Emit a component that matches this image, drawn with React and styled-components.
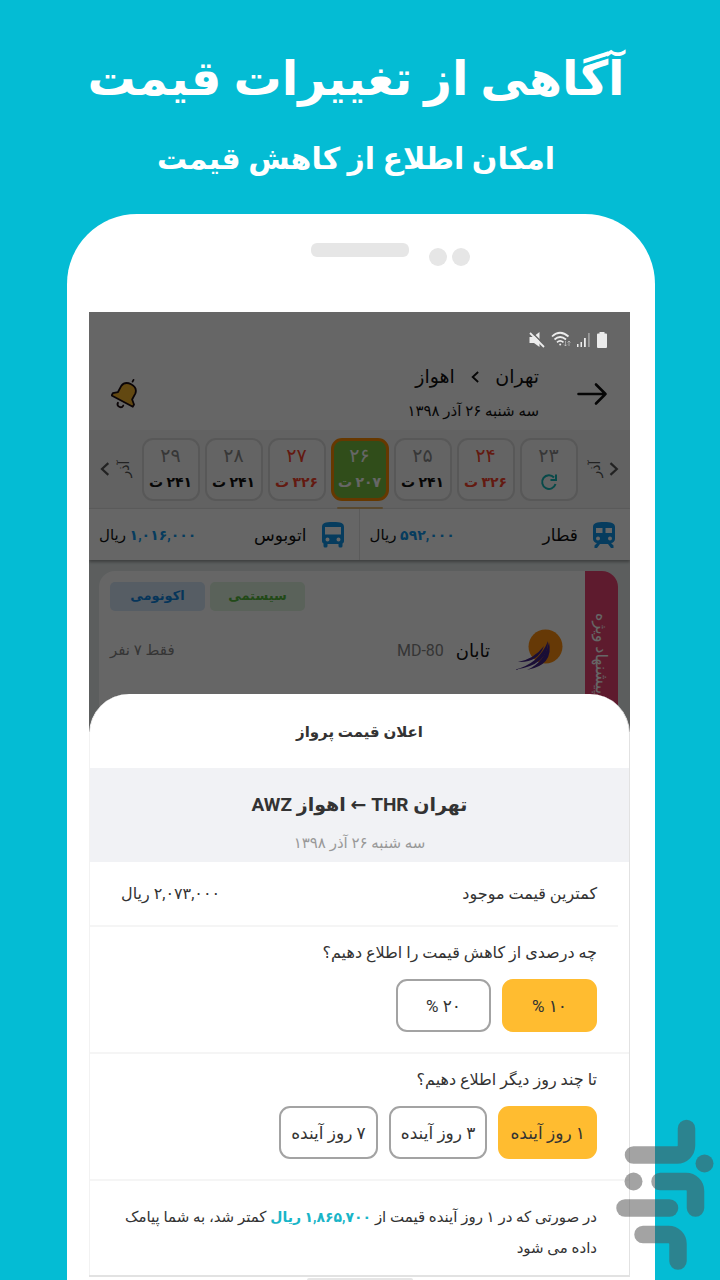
import React, { useState } from "react";
import styled, { createGlobalStyle, css } from "styled-components";

const GlobalStyle = createGlobalStyle`
  *, *::before, *::after { box-sizing: border-box; }
  body {
    margin: 0;
    background: #04bcd4;
    font-family: Roboto, "DejaVu Sans", sans-serif;
    color: #333;
  }
  button { font-family: inherit; color: inherit; cursor: pointer; }
  h1, h2, h3, p { margin: 0; }
`;

const Page = styled.div`
  min-height: 100vh;
  display: flex;
  flex-direction: column;
  position: relative;
  overflow: hidden;
`;

const Hero = styled.header`
  direction: rtl;
  padding: 44px 24px 30px 16px;
  display: flex;
  flex-direction: column;
  align-items: center;
  gap: 20px;
  color: #fff;
  white-space: nowrap;
`;

const HeroTitle = styled.h1`
  font-size: 48px;
  line-height: 70px;
  font-weight: 700;
`;

const HeroSubtitle = styled.p`
  font-size: 30px;
  line-height: 50px;
  font-weight: 700;
`;

const Phone = styled.main`
  flex: 1;
  margin: 0 65px 0 67px;
  padding: 0 25px 0 22px;
  background: #fff;
  border-radius: 70px 70px 0 0;
`;

const PhoneTop = styled.div`
  height: 98px;
  padding-top: 29px;
  display: grid;
  grid-template-columns: 1fr auto 1fr;
  align-items: start;
`;

const Speaker = styled.span`
  grid-column: 2;
  width: 98px;
  height: 14px;
  border-radius: 6px;
  background: #e6e6e6;
`;

const Sensors = styled.span`
  display: flex;
  gap: 5px;
  padding: 5px 0 0 20px;
`;

const Sensor = styled.i`
  width: 18px;
  height: 18px;
  border-radius: 50%;
  background: #e6e6e6;
`;

const Screen = styled.div`
  direction: rtl;
  border-bottom: 2px solid #e2e2e2;
`;

const AppView = styled.div`
  position: relative;
  overflow: hidden;
  background: #fff;
  color: #111;
`;

const Scrim = styled.div`
  position: absolute;
  inset: 0;
  background: rgba(0, 0, 0, 0.6);
`;

const StatusBar = styled.div`
  position: relative;
  z-index: 1;
  direction: ltr;
  height: 46px;
  padding: 10px 22px 0 0;
  display: flex;
  justify-content: flex-end;
  align-items: center;
  gap: 5px;
`;

const AppBar = styled.div`
  height: 72px;
  padding: 0 22px;
  display: flex;
  align-items: center;
`;

const IconButton = styled.button`
  border: 0;
  padding: 0;
  background: none;
  display: flex;
`;

const TripInfo = styled.div`
  flex: 1;
  margin-right: 38px;
`;

const TripCities = styled.h2`
  display: flex;
  align-items: center;
  gap: 16px;
  font-size: 19px;
  line-height: 34px;
  font-weight: 400;
`;

const TripDate = styled.p`
  font-size: 15px;
  line-height: 34px;
`;

const DateStrip = styled.div`
  height: 79px;
  padding: 0 11px;
  display: flex;
  align-items: center;
  justify-content: space-between;
  background: #f4f4f4;
  border-bottom: 1px solid #e6e6e6;
`;

const MonthNav = styled.button`
  border: 0;
  padding: 0;
  background: none;
  display: flex;
  flex-direction: ${(p) => (p.$end ? "row-reverse" : "row")};
  align-items: center;
  gap: 4px;
  color: #555;
`;

const MonthName = styled.span`
  width: 20px;
  font-size: 14px;
  line-height: 20px;
  display: flex;
  justify-content: center;
  transform: rotate(-90deg);
`;

const Days = styled.div`
  display: flex;
  gap: 5px;
`;

const Day = styled.button`
  position: relative;
  width: 58px;
  height: 63px;
  padding: 0;
  border: 2px solid #dcdcdc;
  border-radius: 11px;
  background: #fafafa;
  display: flex;
  flex-direction: column;
  align-items: center;
  justify-content: center;
  white-space: nowrap;
  color: ${(p) => (p.$hot ? "#f8432c" : "#111")};
  ${(p) =>
    p.$active &&
    css`
      background: #79c142;
      border: 3px solid #ff8c00;
      color: #fff;

      &::after {
        content: "";
        position: absolute;
        bottom: -11px;
        width: 46px;
        height: 2px;
        border-radius: 2px;
        background: #e0b878;
      }
    `}
`;

const DayNumber = styled.span`
  font-size: 19px;
  line-height: 26px;
  color: ${(p) => (p.$muted ? "#8a8a8a" : "inherit")};
`;

const DayPrice = styled.span`
  height: 26px;
  font-size: 14px;
  line-height: 26px;
  font-weight: 700;
  display: flex;
  align-items: center;
`;

const Modes = styled.div`
  height: 51px;
  display: grid;
  grid-template-columns: 1fr 1fr;
  box-shadow: 0 2px 3px rgba(0, 0, 0, 0.35);
  position: relative;
`;

const Mode = styled.a`
  display: flex;
  align-items: center;
  gap: 15px;
  padding: 0 15px 0 10px;
  color: #111;
  text-decoration: none;
  font-size: 17px;
  white-space: nowrap;

  & + & {
    border-right: 1px solid #e4e4e4;
  }
`;

const ModePrice = styled.span`
  margin-right: auto;
  font-size: 15px;

  b {
    font-size: 14px;
    color: #0f96ea;
  }
`;

const Results = styled.div`
  height: 172px;
  padding: 11px 12px 0 10px;
  background: #e6ecec;
`;

const Flight = styled.article`
  height: 161px;
  display: flex;
  background: #fff;
  border-radius: 16px 16px 0 0;
  overflow: hidden;
`;

const Ribbon = styled.div`
  width: 33px;
  background: #ea4573;
  color: #fff;
  writing-mode: vertical-rl;
  display: flex;
  justify-content: flex-end;
  align-items: center;
  padding-top: 42px;
  font-size: 16px;
  white-space: nowrap;
`;

const FlightBody = styled.div`
  flex: 1;
  padding: 11px 22px 0 11px;
`;

const Tags = styled.div`
  display: flex;
  justify-content: flex-end;
  gap: 5px;
`;

const Tag = styled.span`
  width: 95px;
  height: 29px;
  border-radius: 5px;
  font-size: 13px;
  line-height: 28px;
  font-weight: 700;
  text-align: center;
  color: ${(p) => (p.$green ? "#55b83c" : "#0f86e0")};
  background: ${(p) => (p.$green ? "#e0f5e0" : "#d6e8fb")};
`;

const FlightRow = styled.div`
  margin-top: 18px;
  display: flex;
  align-items: center;
`;

const Airline = styled.span`
  margin: 0 24px 0 12px;
  font-size: 18px;
`;

const Muted = styled.span`
  font-size: ${(p) => p.$size || 16}px;
  color: #858585;
`;

const Seats = styled(Muted)`
  margin-right: auto;
`;

const Sheet = styled.section`
  position: relative;
  margin-top: -38px;
  background: #fff;
  border-radius: 40px 40px 0 0;
  border-right: 1px solid #e2e2e2;
  border-left: 1px solid #f2f2f2;
`;

const SheetTitle = styled.h2`
  padding: 19px 0 17px;
  font-size: 15px;
  line-height: 38px;
  font-weight: 700;
  text-align: center;
`;

const RouteBox = styled.div`
  height: 94px;
  padding-top: 18px;
  background: #f1f2f5;
  text-align: center;
`;

const RouteName = styled.h3`
  font-size: 19px;
  line-height: 38px;
  font-weight: 700;
`;

const RouteDate = styled.p`
  font-size: 15px;
  line-height: 38px;
  color: #999;
`;

const Lowest = styled.div`
  height: 65px;
  margin-right: 11px;
  padding: 0 21px 0 31px;
  display: flex;
  align-items: center;
  justify-content: space-between;
  font-size: 16px;
  border-bottom: 2px solid #f5f5f5;
`;

const Question = styled.div`
  padding: 9px 32px 20px;
  border-bottom: 2px solid #f5f5f5;
`;

const QuestionText = styled.p`
  font-size: 16px;
  line-height: 34px;
  margin-bottom: 9px;
`;

const Options = styled.div`
  display: flex;
  gap: 11px;
`;

const Option = styled.button`
  min-width: 95px;
  height: 53px;
  padding: 0 10px;
  border: 2px solid ${(p) => (p.$active ? "#ffbc30" : "#a3a3a3")};
  border-radius: 11px;
  background: ${(p) => (p.$active ? "#ffbc30" : "#fff")};
  font-size: 17px;
  white-space: nowrap;
`;

const Note = styled.p`
  padding: 21px 32px 11px 24px;
  font-size: 15px;
  line-height: 31px;

  b {
    font-size: 14px;
    color: #19b5c8;
  }
`;

const HomeKey = styled.div`
  width: 106px;
  height: 2px;
  margin: 1px auto 0;
  border-radius: 2px 2px 0 0;
  background: #e6e6e6;
`;

const Watermark = styled.svg`
  position: absolute;
  right: 6px;
  bottom: 9px;
`;

function StatusIcons() {
  return (
    <>
      <svg width="18" height="18" viewBox="0 0 18 18" fill="#ececec">
        <path d="M1.500 6H5l6.500-5v15L6 12H1.500z" />
        <path d="M3.500 1l13 13" stroke="#666" strokeWidth="1.600" />
        <path d="M2 2l14 14" stroke="#ececec" strokeWidth="1.800" />
      </svg>
      <svg width="20" height="18" viewBox="0 0 20 18" fill="none" stroke="#ececec" strokeWidth="1.700">
        <path d="M1 5.500Q9 -2 17.500 5.500M3.500 8.500Q9 3.500 15 8.500M6 11.300Q9 8.500 12.500 11.300" />
        <circle cx="9.200" cy="13.500" r="1" fill="#ececec" stroke="none" />
        <path d="M14.500 10v5m-1.500-1.500l1.500 1.500 1.500-1.500M18 15v-5m-1.500 1.500L18 10l1.500 1.500" strokeWidth=".8" opacity=".6" />
      </svg>
      <svg width="15" height="18" viewBox="0 0 15 18" fill="#ececec">
        <path d="M1 13h1.500v3H1zM4.500 11H6v5H4.500zM8 7h1.800v9H8z" />
        <path d="M12 2h1.800v14H12z" opacity=".4" />
      </svg>
      <svg width="12" height="18" viewBox="0 0 12 18" fill="#ececec">
        <path d="M3.500 1h5v1.500H10q1 0 1 1V16q0 1-1 1H2q-1 0-1-1V3.500q0-1 1-1h1.500z" />
      </svg>
    </>
  );
}

const Chevron = ({ left, size = 14 }) => (
  <svg width={size * 0.7} height={size} viewBox="0 0 10 14" fill="none" stroke="currentColor" strokeWidth="2.200">
    <path d={left ? "M8.500 1L2 7l6.500 6" : "M1.500 1L8 7l-6.500 6"} />
  </svg>
);

const BackArrow = () => (
  <svg width="31" height="24" viewBox="0 0 31 24" fill="none" stroke="#111" strokeWidth="2.600" strokeLinecap="round" strokeLinejoin="round">
    <path d="M1.500 12h27M19 2.500L28.500 12 19 21.500" />
  </svg>
);

const Bell = () => (
  <svg width="30" height="32" viewBox="0 0 30 32">
    <g transform="rotate(28 15 16)" stroke="#1d0d12" strokeWidth="1.800" strokeLinejoin="round" strokeLinecap="round">
      <path d="M15 0v2" fill="none" />
      <path d="M7 11q1-6 8-6t8 6v7l4 3.500V24H3v-2.500L7 18z" fill="#f5b42c" />
      <path d="M12 27.500q0 3 3 3t3-3" fill="none" />
    </g>
  </svg>
);

const Refresh = () => (
  <svg width="18" height="18" viewBox="0 0 18 18" fill="none" stroke="#12b6b6" strokeWidth="2">
    <path d="M15.500 11a6.800 6.800 0 1 1-1.500-6.500" />
    <path d="M16 1.500V7h-5.500" />
  </svg>
);

const Train = () => (
  <svg width="22" height="26" viewBox="0 0 22 26">
    <path fill="#0f96ea" fillRule="evenodd" d="M11 0c7 0 11 1 11 5v12c0 2-2 4-4 4l2.500 2.500V26H18l-3-4H7l-3 4H1.500v-2.500L4 21c-2 0-4-2-4-4V5C0 1 4 0 11 0zM3 6v5h6.500V6zm9.500 0v5H19V6zM5 14.500a2 2 0 1 0 0 4 2 2 0 0 0 0-4zm12 0a2 2 0 1 0 0 4 2 2 0 0 0 0-4z" />
  </svg>
);

const Bus = () => (
  <svg width="22" height="26" viewBox="0 0 22 26">
    <path fill="#0f96ea" fillRule="evenodd" d="M11 0c8 0 11 1 11 5v14c0 1-.500 2-1.500 2.500V24q0 1.500-1.500 1.500h-1q-1.500 0-1.500-1.500v-2h-11v2q0 1.500-1.500 1.500H3Q1.500 25.500 1.500 24v-2.500C.500 21 0 20 0 19V5C0 1 3 0 11 0zM3 5v7.500h16V5zm2.500 10.500a2 2 0 1 0 0 4 2 2 0 0 0 0-4zm11 0a2 2 0 1 0 0 4 2 2 0 0 0 0-4z" />
  </svg>
);

const TabanLogo = () => (
  <svg width="49" height="42" viewBox="0 0 49 42">
    <circle cx="31.500" cy="17.500" r="17" fill="#ff9010" />
    <g fill="#432487">
      <path d="M4 33Q20 30 30 17Q24 34 4 33z" />
      <path d="M0 41Q25 35 34 12Q35 36 0 41z" />
      <path d="M13 41Q31 33 35 13Q40 36 13 41z" />
    </g>
  </svg>
);

const days = [
  { n: "۲۳" },
  { n: "۲۴", price: "۳۲۶ ت", hot: true },
  { n: "۲۵", price: "۲۴۱ ت" },
  { n: "۲۶", price: "۲۰۷ ت", active: true },
  { n: "۲۷", price: "۳۲۶ ت", hot: true },
  { n: "۲۸", price: "۲۴۱ ت" },
  { n: "۲۹", price: "۲۴۱ ت" },
];

function OptionGroup({ question, options }) {
  const [selected, setSelected] = useState(0);
  return (
    <Question>
      <QuestionText>{question}</QuestionText>
      <Options role="group" aria-label={question}>
        {options.map((label, i) => (
          <Option key={label} type="button" $active={i === selected} aria-pressed={i === selected} onClick={() => setSelected(i)}>
            {label}
          </Option>
        ))}
      </Options>
    </Question>
  );
}

export default function App() {
  return (
    <Page lang="fa">
      <GlobalStyle />
      <Hero>
        <HeroTitle>آگاهی از تغییرات قیمت</HeroTitle>
        <HeroSubtitle>امکان اطلاع از کاهش قیمت</HeroSubtitle>
      </Hero>

      <Phone>
        <PhoneTop>
          <Speaker />
          <Sensors>
            <Sensor />
            <Sensor />
          </Sensors>
        </PhoneTop>

        <Screen>
          <AppView>
            <StatusBar>
              <StatusIcons />
            </StatusBar>
            <AppBar>
              <IconButton type="button" aria-label="بازگشت">
                <BackArrow />
              </IconButton>
              <TripInfo>
                <TripCities>
                  <span>تهران</span>
                  <Chevron left size={12} />
                  <span>اهواز</span>
                </TripCities>
                <TripDate>سه شنبه ۲۶ آذر ۱۳۹۸</TripDate>
              </TripInfo>
              <IconButton type="button" aria-label="اعلان قیمت">
                <Bell />
              </IconButton>
            </AppBar>

            <DateStrip>
              <MonthNav type="button">
                <Chevron />
                <MonthName>آذر</MonthName>
              </MonthNav>
              <Days>
                {days.map((d) => (
                  <Day key={d.n} type="button" $hot={d.hot} $active={d.active}>
                    <DayNumber $muted={!d.hot && !d.active}>{d.n}</DayNumber>
                    <DayPrice>{d.price || <Refresh />}</DayPrice>
                  </Day>
                ))}
              </Days>
              <MonthNav type="button" $end>
                <Chevron left />
                <MonthName>آذر</MonthName>
              </MonthNav>
            </DateStrip>

            <Modes>
              <Mode href="#train">
                <Train />
                <span>قطار</span>
                <ModePrice>
                  <b>۵۹۲,۰۰۰</b> ریال
                </ModePrice>
              </Mode>
              <Mode href="#bus">
                <Bus />
                <span>اتوبوس</span>
                <ModePrice>
                  <b>۱,۰۱۶,۰۰۰</b> ریال
                </ModePrice>
              </Mode>
            </Modes>

            <Results>
              <Flight>
                <Ribbon>پیشنهاد ویژه</Ribbon>
                <FlightBody>
                  <Tags>
                    <Tag $green>سیستمی</Tag>
                    <Tag>اکونومی</Tag>
                  </Tags>
                  <FlightRow>
                    <TabanLogo />
                    <Airline>تابان</Airline>
                    <Muted>MD-80</Muted>
                    <Seats $size={15}>فقط ۷ نفر</Seats>
                  </FlightRow>
                </FlightBody>
              </Flight>
            </Results>
            <Scrim />
          </AppView>

          <Sheet>
            <SheetTitle>اعلان قیمت پرواز</SheetTitle>
            <RouteBox>
              <RouteName>تهران THR ← اهواز AWZ</RouteName>
              <RouteDate>سه شنبه ۲۶ آذر ۱۳۹۸</RouteDate>
            </RouteBox>
            <Lowest>
              <span>کمترین قیمت موجود</span>
              <span>۲,۰۷۳,۰۰۰ ریال</span>
            </Lowest>
            <OptionGroup question="چه درصدی از کاهش قیمت را اطلاع دهیم؟" options={["۱۰ %", "۲۰ %"]} />
            <OptionGroup question="تا چند روز دیگر اطلاع دهیم؟" options={["۱ روز آینده", "۳ روز آینده", "۷ روز آینده"]} />
            <Note>
              در صورتی که در ۱ روز آینده قیمت از <b>۱,۸۶۵,۷۰۰ ریال</b> کمتر شد، به شما پیامک داده می شود
            </Note>
          </Sheet>
        </Screen>
        <HomeKey />
      </Phone>

      <Watermark width="98" height="153" viewBox="616 1118 98 153" aria-hidden="true">
        <g opacity=".52">
          <g fill="none" stroke="#515151" strokeWidth="17.500" strokeLinecap="round">
            <path d="M633.500 1155H677a9.500 9.500 0 0 0 9.500-9.500V1128.500" />
            <path d="M660 1181.500H686a9.500 9.500 0 0 1 9.500 9.500V1208" />
            <path d="M625 1208H669.500" />
            <path d="M643 1234.500H668.500a9.500 9.500 0 0 1 9.500 9.500V1261" />
          </g>
          <g fill="#515151">
            <circle cx="704.500" cy="1163.500" r="9" />
            <circle cx="633.500" cy="1181.500" r="9" />
          </g>
        </g>
      </Watermark>
    </Page>
  );
}
